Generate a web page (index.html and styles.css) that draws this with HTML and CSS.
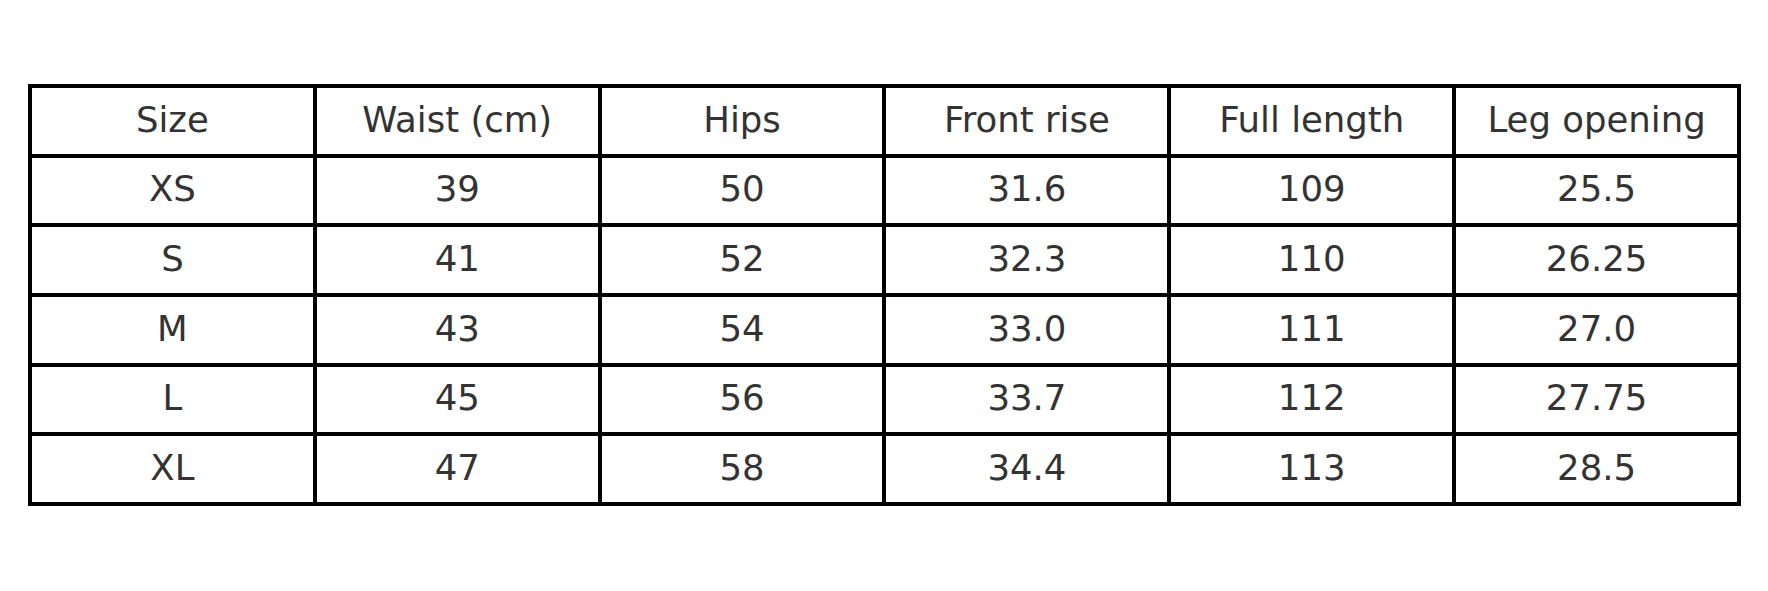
FILE: index.html
```html
<!DOCTYPE html>
<html>
<head>
<meta charset="utf-8">
<link rel="stylesheet" href="styles.css">
</head>
<body>
<div class="page">
<table class="size-table">
<tr><td>Size</td><td>Waist (cm)</td><td>Hips</td><td>Front rise</td><td>Full length</td><td>Leg opening</td></tr>
<tr><td>XS</td><td>39</td><td>50</td><td>31.6</td><td>109</td><td>25.5</td></tr>
<tr><td>S</td><td>41</td><td>52</td><td>32.3</td><td>110</td><td>26.25</td></tr>
<tr><td>M</td><td>43</td><td>54</td><td>33.0</td><td>111</td><td>27.0</td></tr>
<tr><td>L</td><td>45</td><td>56</td><td>33.7</td><td>112</td><td>27.75</td></tr>
<tr><td>XL</td><td>47</td><td>58</td><td>34.4</td><td>113</td><td>28.5</td></tr>
</table>
</div>
</body>
</html>
```
FILE: styles.css
```css
html, body {
  margin: 0;
  padding: 0;
  background: #fff;
}
.page {
  padding: 84px 0 0 28px;
}
.size-table {
  width: 1713px;
  height: 422px;
  table-layout: fixed;
  border-collapse: separate;
  border-spacing: 4px;
  background: #000;
  font-family: "DejaVu Sans", sans-serif;
  font-size: 35.5px;
  color: #333;
}
.size-table td {
  background: #fff;
  text-align: center;
  vertical-align: middle;
  padding: 0 0 3px 0;
  height: 62.67px;
}
```
